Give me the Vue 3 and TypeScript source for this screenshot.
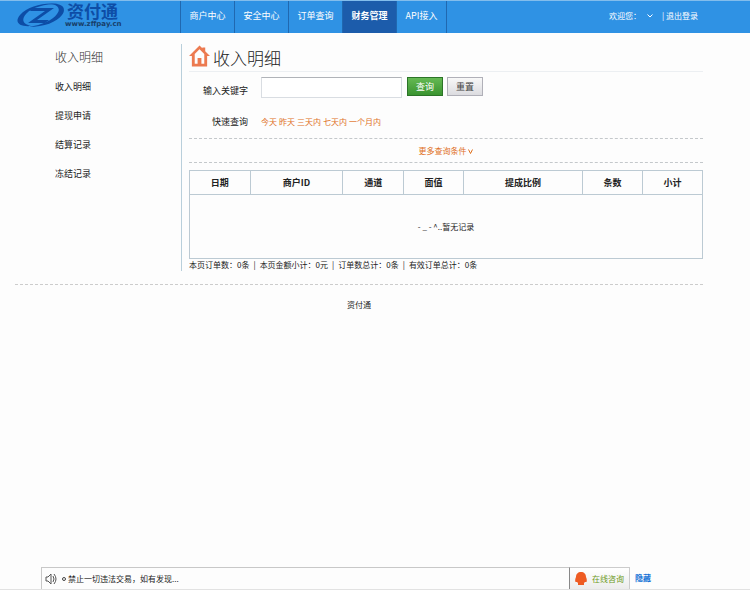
<script setup lang="ts">
import { ref } from 'vue'

interface Column {
  label: string
  width: string
}

const navItems: string[] = ['商户中心', '安全中心', '订单查询', '财务管理', 'API接入']
const activeNav = ref('财务管理')

const sideItems: string[] = ['收入明细', '提现申请', '结算记录', '冻结记录']
const ranges: string[] = ['今天', '昨天', '三天内', '七天内', '一个月内']

const columns: Column[] = [
  { label: '日期', width: '11.8%' },
  { label: '商户ID', width: '18.1%' },
  { label: '通道', width: '11.8%' },
  { label: '面值', width: '11.7%' },
  { label: '提成比例', width: '23.2%' },
  { label: '条数', width: '11.7%' },
  { label: '小计', width: '11.7%' },
]

const totals: string[] = ['本页订单数：0条', '本页金额小计：0元', '订单数总计：0条', '有效订单总计：0条']
const keyword = ref('')
const noticeVisible = ref(true)
</script>

<template>
  <div class="page" lang="zh-CN">
    <header class="topbar">
      <a class="logo" href="#">
        <svg class="logo-mark" viewBox="0 0 48 24" aria-hidden="true">
          <path d="M42 1C29-1 12 3 4 12C-2 19 3 24 15 23C7 21 5 17 10 11C16 4 29 1 42 1Z" fill="#0d4da6" />
          <path d="M35 1C46 0 51 5 46 12C41 19 28 24 13 24C26 22 37 17 41 11C45 6 42 2 35 1Z" fill="#0d4da6" />
          <path d="M16 5H38L21 17H33L29 20H12L29 8H14Z" fill="#0d4da6" />
        </svg>
        <span class="logo-text">
          <strong class="logo-name">资付通</strong>
          <span class="logo-url">www.zffpay.cn</span>
        </span>
      </a>
      <nav class="nav">
        <a
          v-for="item in navItems"
          :key="item"
          href="#"
          class="nav-item"
          :class="{ active: item === activeNav }"
          @click.prevent="activeNav = item"
        >{{ item }}</a>
      </nav>
      <div class="account">
        <span>欢迎您：</span>
        <svg class="chevron" viewBox="0 0 6 4" aria-hidden="true"><path d="M.5.5L3 3L5.500.5" /></svg>
        <span class="logout">| <a href="#">退出登录</a></span>
      </div>
    </header>

    <div class="container">
      <div class="columns">
        <aside class="sidebar">
          <h2>收入明细</h2>
          <a v-for="item in sideItems" :key="item" href="#">{{ item }}</a>
        </aside>

        <main class="main">
          <h1 class="title">
            <svg class="home" viewBox="0 0 22 22" aria-hidden="true">
              <path d="M11 0L14 3V2H17V6L22 11H19V22H3V11H0ZM11 4L6 9V19H9V13H13V19H16V9Z" fill="#ec7a50" fill-rule="evenodd" />
            </svg>
            收入明细
          </h1>

          <form class="search" @submit.prevent>
            <div class="row keyword-row">
              <label class="caption" for="keyword">输入关键字</label>
              <input id="keyword" v-model="keyword" type="text" />
              <button class="btn primary" type="submit">查询</button>
              <button class="btn" type="reset">重置</button>
            </div>
            <div class="row quick-row">
              <span class="caption">快速查询</span>
              <span class="ranges">
                <a v-for="range in ranges" :key="range" href="#">{{ range }}</a>
              </span>
            </div>
          </form>

          <div class="more">
            <a href="#">更多查询条件
              <svg class="more-arrow" viewBox="0 0 5 5" aria-hidden="true"><path d="M.5.5L2.500 4.500L4.500.5" /></svg>
            </a>
          </div>

          <table class="records">
            <colgroup>
              <col v-for="column in columns" :key="column.label" :style="{ width: column.width }" />
            </colgroup>
            <thead>
              <tr>
                <th v-for="column in columns" :key="column.label" scope="col">{{ column.label }}</th>
              </tr>
            </thead>
            <tbody>
              <tr>
                <td :colspan="columns.length">- _ - ^..暂无记录</td>
              </tr>
            </tbody>
          </table>

          <div class="totals">
            <span v-for="total in totals" :key="total">{{ total }}</span>
          </div>
        </main>
      </div>

      <footer class="footer">资付通</footer>
    </div>

    <div v-if="noticeVisible" class="notice">
      <div class="notice-text">
        <svg class="speaker" viewBox="0 0 13 12" aria-hidden="true">
          <path d="M1 4H3L6 1V11L3 8H1ZM8 3Q10 6 8 9M9 1Q13 6 9 11" />
        </svg>
        <span class="dot"></span>
        <span>禁止一切违法交易，如有发现...</span>
      </div>
      <a class="chat" href="#">
        <svg class="qq" viewBox="0 0 12 13" aria-hidden="true">
          <path d="M6 0C3 0 1 2 1 5C0 7 0 9 .5 10L2 10L3 11L3 13H9L9 11L10 10L11.500 10C12 9 12 7 11 5C11 2 9 0 6 0Z" fill="#ee5b22" />
        </svg>
        在线咨询
      </a>
      <button class="hide" type="button" @click="noticeVisible = false">隐藏</button>
    </div>
  </div>
</template>

<style>
body {
  margin: 0;
  background: #fdfdfd;
}
</style>

<style scoped>
.page {
  box-sizing: border-box;
  display: flex;
  flex-direction: column;
  min-height: 100vh;
  border-bottom: 1px solid #e2e2e2;
  color: #222;
  font: 9px/12px "Noto Sans CJK SC", sans-serif;
}

.page a {
  color: inherit;
  text-decoration: none;
}

.topbar {
  box-sizing: border-box;
  display: flex;
  height: 33px;
  padding-right: 52px;
  border-top: 1px solid #83bdec;
  background: #2f92e4;
  color: #fff;
}

.page .logo {
  box-sizing: border-box;
  display: flex;
  gap: 1px;
  width: 180px;
  padding-left: 16px;
  color: #0d4da6;
}

.logo-mark {
  width: 48px;
  height: 24px;
  margin-top: 2px;
}

.logo-text {
  display: flex;
  flex-direction: column;
}

.logo-name {
  padding-left: 2px;
  font-size: 17px;
  line-height: 19px;
}

.logo-url {
  color: #183f6b;
  font: bold 7px/8px "DejaVu Sans", sans-serif;
}

.nav {
  display: flex;
  border-left: 1px solid #2068b0;
}

.nav-item {
  box-sizing: border-box;
  min-width: 54px;
  padding: 0 8px;
  border-right: 1px solid #2068b0;
  line-height: 30px;
  text-align: center;
}

.nav-item:last-child {
  min-width: 50px;
}

.nav-item.active {
  background: #1c5cab;
  font-weight: bold;
}

.account {
  display: flex;
  align-items: center;
  gap: 6px;
  height: 30px;
  margin-left: auto;
  font-size: 8px;
}

.logout {
  padding-left: 3px;
}

.chevron {
  width: 6px;
  height: 4px;
  fill: none;
  stroke: #fff;
}

.container {
  margin: 0 47px 0 15px;
}

.columns {
  display: flex;
  padding-top: 11px;
}

.sidebar {
  display: flex;
  flex-direction: column;
  gap: 17px;
  flex: 0 0 126px;
  padding: 6px 0 0 40px;
  border-right: 1px solid #b9cfdb;
}

.sidebar h2 {
  margin: 0;
  color: #333;
  font-size: 12px;
  font-weight: 300;
  line-height: 14px;
}

.main {
  flex: 1;
  min-width: 0;
  padding-left: 7px;
}

.title {
  display: flex;
  align-items: center;
  gap: 3px;
  height: 27px;
  margin: 0;
  border-bottom: 1px solid #eceff2;
  font-size: 17px;
  font-weight: 300;
  line-height: 24px;
}

.home {
  width: 21px;
  height: 22px;
  margin-bottom: 4px;
}

.search {
  border-bottom: 1px dashed #c4c8cb;
  padding: 5px 0 10px;
}

.row {
  display: flex;
}

.caption {
  width: 59px;
  margin-right: 13px;
  text-align: right;
}

.keyword-row .caption {
  padding-top: 8px;
}

.keyword-row input {
  box-sizing: border-box;
  width: 141px;
  height: 21px;
  margin-right: 5px;
  padding: 0 4px;
  border: 1px solid #d9dde2;
  border-top-color: #b0b3b8;
  background: #fff;
  font: inherit;
}

.btn {
  box-sizing: border-box;
  width: 36px;
  height: 19px;
  margin-right: 4px;
  padding: 0;
  border: 1px solid #b0b0b8;
  background: linear-gradient(#f8f8f8, #dcdce0);
  color: #444;
  font: inherit;
}

.btn.primary {
  border-color: #2c7428;
  background: linear-gradient(#65b953, #3a9430);
  color: #fff;
}

.quick-row {
  padding-top: 18px;
}

.ranges {
  display: flex;
  gap: 2px;
  color: #e0701c;
  font-size: 8px;
}

.more {
  padding: 6px 0 5px;
  border-bottom: 1px dashed #c4c8cb;
  color: #e0701c;
  font-size: 8px;
  text-align: center;
}

.more-arrow {
  width: 5px;
  height: 5px;
  fill: none;
  stroke: currentColor;
}

.records {
  width: 100%;
  margin-top: 7px;
  border-collapse: collapse;
  table-layout: fixed;
}

.records th,
.records td {
  box-sizing: border-box;
  height: 24px;
  padding: 0;
  border: 1px solid #bccad3;
  text-align: center;
}

.records td {
  height: 64px;
  font-size: 8px;
}

.totals {
  display: flex;
  font-size: 8px;
}

.totals span + span::before {
  content: "|";
  margin: 0 4px;
}

.footer {
  margin-top: 13px;
  padding-top: 14px;
  border-top: 1px dashed #ccc;
  font-size: 8px;
  text-align: center;
}

.notice {
  display: flex;
  height: 22px;
  margin: auto 99px 0 41px;
  font-size: 8px;
  line-height: 20px;
}

.notice-text {
  display: flex;
  align-items: center;
  flex: 1;
  padding-left: 3px;
  border: 1px solid #c8c8c8;
  border-width: 1px 1px 0;
  border-right-color: #888;
}

.speaker {
  width: 13px;
  height: 12px;
  fill: none;
  stroke: #555;
}

.dot {
  width: 2px;
  height: 2px;
  margin: 0 2px 0 4px;
  border: 1px solid #444;
  border-radius: 50%;
}

.page .chat {
  display: flex;
  align-items: center;
  gap: 5px;
  padding: 0 5px;
  border: 1px solid #ccc;
  border-width: 1px 1px 0 0;
  background: linear-gradient(#fff, #ececec);
  color: #6d9a23;
}

.qq {
  width: 12px;
  height: 13px;
}

.hide {
  margin-left: 5px;
  padding: 0;
  border: 0;
  background: none;
  color: #1673d6;
  font: inherit;
  font-weight: bold;
}
</style>
